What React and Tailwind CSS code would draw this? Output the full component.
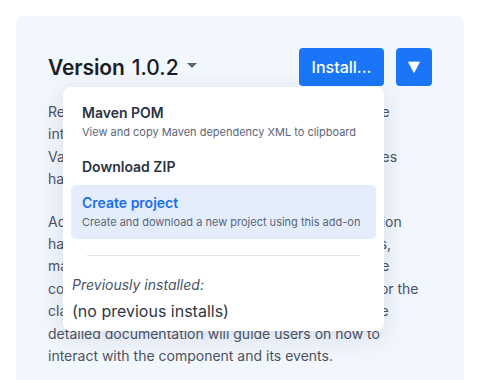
import React from "react";

const p1 = [
  "Reusable component that makes it easy to wrap the",
  "interactive charts to a Vaadin Flow application.",
  "Vaadin 24 and later versions are supported, changes",
  "have been tested with the latest release.",
];
const p2 = [
  "Add-on features include the Java API, documentation",
  "hands-on demos, full theme support in both modes,",
  "many options and all events that can be fired by the",
  "code to react to user's actions. You can extend it for the",
  "class hierarchy in all your own views easily, and the",
  "detailed documentation will guide users on how to",
  "interact with the component and its events.",
];

export default function App() {
  return (
    <div
      className="h-[380px] overflow-hidden bg-white pl-4 pr-[13px] pt-4"
      style={{ fontFamily: "Inter, 'Noto Sans', sans-serif" }}
    >
      <div className="h-[420px] rounded-lg bg-[#f2f6fd] px-8 pt-8">
        <div className="relative flex h-[38px] items-center justify-between">
          <div className="flex items-center">
            <span className="text-[21px] font-semibold leading-none tracking-[-0.1px] text-[#1a1e27]">
              Version
            </span>
            <span className="ml-[7px] text-[21px] font-medium leading-none text-[#1a1e27]">
              1.0.2
            </span>
            <svg width="10" height="6" viewBox="0 0 10 6" className="ml-[8px] mt-[-2px]">
              <polygon points="0,0 10,0 5,5" fill="#5c6573" />
            </svg>
          </div>
          <div className="flex items-center gap-3">
            <button className="flex h-[38px] w-[85px] items-center justify-center rounded-[4px] bg-[#1a76f6] text-[16px] font-medium text-white">
              Install...
            </button>
            <button className="flex h-[38px] w-9 items-center justify-center rounded-[4px] bg-[#1a76f6]">
              <svg width="12" height="12" viewBox="0 0 12 12">
                <polygon points="0.5,1 11.5,1 6,11.5" fill="#ffffff" strokeLinejoin="round" stroke="#ffffff" strokeWidth="0.8" />
              </svg>
            </button>
          </div>

          <div className="absolute left-[15px] top-[39px] z-10 w-[321px] rounded-lg bg-white p-2 shadow-[0_6px_24px_rgba(40,60,100,0.13)]">
            <div className="rounded-[5px] px-[11px] pb-[9px] pt-2">
              <div className="whitespace-nowrap text-[14px] font-semibold leading-5 text-[#2b3442]">Maven POM</div>
              <div className="mt-px whitespace-nowrap text-[11px] leading-4 text-[#5b6676]">
                View and copy Maven dependency XML to clipboard
              </div>
            </div>
            <div className="rounded-[5px] px-[11px] py-2">
              <div className="whitespace-nowrap text-[14px] font-semibold leading-5 text-[#2b3442]">Download ZIP</div>
            </div>
            <div className="rounded-[5px] bg-[#e3edfc] px-[11px] pb-[9px] pt-2">
              <div className="whitespace-nowrap text-[14px] font-semibold leading-5 text-[#1a6fe6]">Create project</div>
              <div className="mt-px whitespace-nowrap text-[11px] leading-4 text-[#5b6676]">
                Create and download a new project using this add-on
              </div>
            </div>
            <div className="mx-4 mt-4 h-px bg-[#dfe5ee]" />
            <div className="mt-[19px] whitespace-nowrap px-px text-[14px] italic leading-5 text-[#4a5464]">
              Previously installed:
            </div>
            <div className="mt-1 whitespace-nowrap px-px text-[16px] leading-6 text-[#2f3744]">
              (no previous installs)
            </div>
          </div>
        </div>

        <div className="mt-[15px] text-[14px] leading-[22.4px] text-[#4b5362]">
          <p className="mb-5">
            {p1.map((l, i) => (
              <span key={i} className="block whitespace-nowrap">{l}</span>
            ))}
          </p>
          <p>
            {p2.map((l, i) => (
              <span key={i} className="block whitespace-nowrap">{l}</span>
            ))}
          </p>
        </div>
      </div>
    </div>
  );
}
